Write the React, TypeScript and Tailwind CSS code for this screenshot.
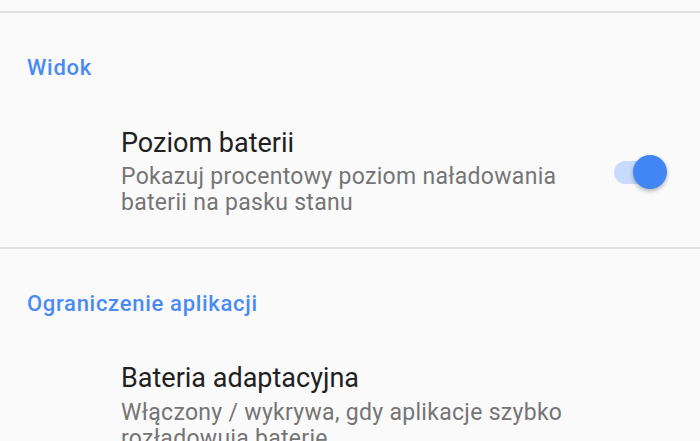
export default function App() {
  return (
    <div className="w-[700px] h-[441px] overflow-hidden bg-[#fafafa] font-['Roboto',sans-serif]">
      <div className="h-[11px]" />
      <div className="h-[2px] bg-[#e0e0e0]" />

      {/* Widok */}
      <div className="pl-[27px] pt-[43px] pb-[48px] text-[22px] leading-[24px] font-medium tracking-[0.7px] text-[#4a8af4]">Widok</div>
      <div className="flex items-center pl-[121px] pr-[33px]">
        <div className="flex-1">
          <div className="text-[27px] leading-[30px] text-[#212121]">Poziom baterii</div>
          <div className="mt-[6px] text-[23px] leading-[26px] tracking-[0.3px] text-[#757575]">
            Pokazuj procentowy poziom naładowania
            <br />
            baterii na pasku stanu
          </div>
        </div>
        <div className="relative w-[53px] h-[34px] flex items-center">
          <div className="w-[50px] h-[23px] rounded-full bg-[#c8dbfc]" />
          <div className="absolute right-0 top-0 w-[34px] h-[34px] rounded-full bg-[#4285f4] shadow-[0_2px_4px_rgba(0,0,0,0.3)]" />
        </div>
      </div>
      <div className="mt-[31px] h-[2px] bg-[#e0e0e0]" />

      {/* Ograniczenie aplikacji */}
      <div className="pl-[27px] pt-[43px] pb-[47px] text-[22px] leading-[24px] font-medium tracking-[0.7px] text-[#4a8af4]">Ograniczenie aplikacji</div>
      <div className="pl-[121px]">
        <div className="text-[27px] leading-[30px] text-[#212121]">Bateria adaptacyjna</div>
        <div className="mt-[7px] text-[23px] leading-[26px] tracking-[0.3px] text-[#757575]">
          Włączony / wykrywa, gdy aplikacje szybko
          <br />
          rozładowują baterię
        </div>
      </div>
    </div>
  );
}
